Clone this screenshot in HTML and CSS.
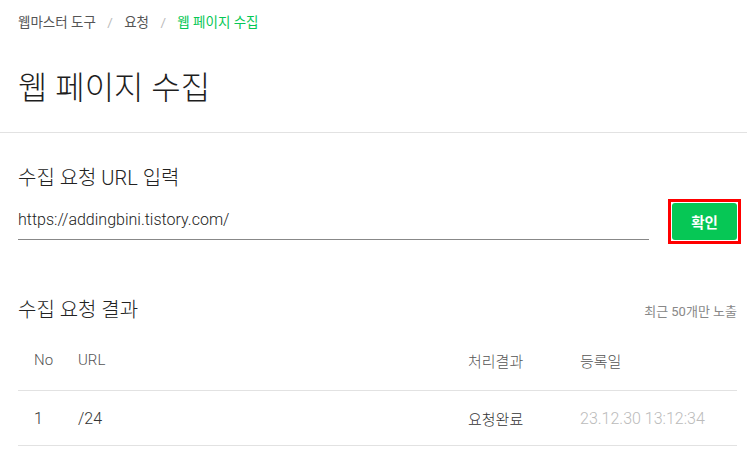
FILE: index.html
```html
<!DOCTYPE html>
<html lang="ko">
<head>
    <meta charset="UTF-8">
    <title>웹 페이지 수집</title>
    <link rel="stylesheet" href="styles.css">
</head>
<body>
    <div class="header">
        <div class="breadcrumb">
            <span>웹마스터 도구</span>
            <span class="sep">/</span>
            <span>요청</span>
            <span class="sep">/</span>
            <span class="current">웹 페이지 수집</span>
        </div>
        <h1>웹 페이지 수집</h1>
    </div>

    <div class="content">
        <h2>수집 요청 URL 입력</h2>
        <div class="form-row">
            <input type="text" class="url-input" value="https://addingbini.tistory.com/">
            <div class="btn-wrap">
                <button class="btn">확인</button>
            </div>
        </div>

        <div class="result-head">
            <h2>수집 요청 결과</h2>
            <span class="note">최근 50개만 노출</span>
        </div>

        <table>
            <thead>
                <tr>
                    <th class="col-no">No</th>
                    <th class="col-url">URL</th>
                    <th class="col-state">처리결과</th>
                    <th class="col-date">등록일</th>
                </tr>
            </thead>
            <tbody>
                <tr>
                    <td class="col-no num">1</td>
                    <td class="col-url num">/24</td>
                    <td class="col-state">요청완료</td>
                    <td class="col-date num date">23.12.30 13:12:34</td>
                </tr>
            </tbody>
        </table>
    </div>
</body>
</html>
```

FILE: styles.css
```css
body {
    margin: 0;
    font-family: Roboto, "Noto Sans CJK KR", sans-serif;
    color: #222;
    background: #fff;
}
.header {
    padding: 12px 18px 0;
    border-bottom: 1px solid #e2e2e2;
    height: 120px;
}
.breadcrumb {
    font-size: 13.5px;
    color: #555;
    line-height: 20px;
}
.breadcrumb .sep {
    color: #bbb;
    margin: 0 8px;
}
.breadcrumb .current {
    color: #06c755;
}
h1 {
    margin: 36px 0 0;
    font-size: 32px;
    font-weight: 300;
    line-height: 40px;
    color: #1e1e1e;
}
.content {
    padding: 0 10px 0 18px;
}
h2 {
    margin: 0;
    font-size: 20px;
    font-weight: 300;
    line-height: 30px;
}
.content > h2 {
    margin-top: 30px;
}
.form-row {
    display: flex;
    align-items: flex-end;
    margin-top: 6px;
}
.url-input {
    flex: 1;
    border: none;
    border-bottom: 1px solid #888;
    font-family: inherit;
    font-size: 16px;
    font-weight: 300;
    color: #222;
    padding: 0 0 10px;
    margin: 0 0 4px;
    outline: none;
}
.btn-wrap {
    margin: 0 -4px 0 19px;
    border: 3px solid #f00;
    padding: 1px;
}
.btn {
    display: block;
    width: 65px;
    height: 37px;
    border: none;
    border-radius: 3px;
    background: #06c755;
    color: #fff;
    font-family: inherit;
    font-size: 14.5px;
    font-weight: 700;
}
.result-head {
    display: flex;
    justify-content: space-between;
    align-items: center;
    margin-top: 51px;
}
.note {
    font-size: 13px;
    color: #888;
}
table {
    width: 100%;
    border-collapse: collapse;
    margin-top: 5px;
}
th, td {
    text-align: left;
    font-size: 15px;
    font-weight: 300;
    padding: 0;
    height: 54px;
    border-bottom: 1px solid #e2e2e2;
}
th {
    color: #555;
    height: 60px;
}
td {
    color: #333;
}
td.num {
    font-size: 16px;
}
.col-no {
    width: 44px;
    padding-left: 16px;
}
.col-url {
    width: 390px;
}
.col-state {
    width: 112px;
}
.date {
    color: #bbb;
}
```
